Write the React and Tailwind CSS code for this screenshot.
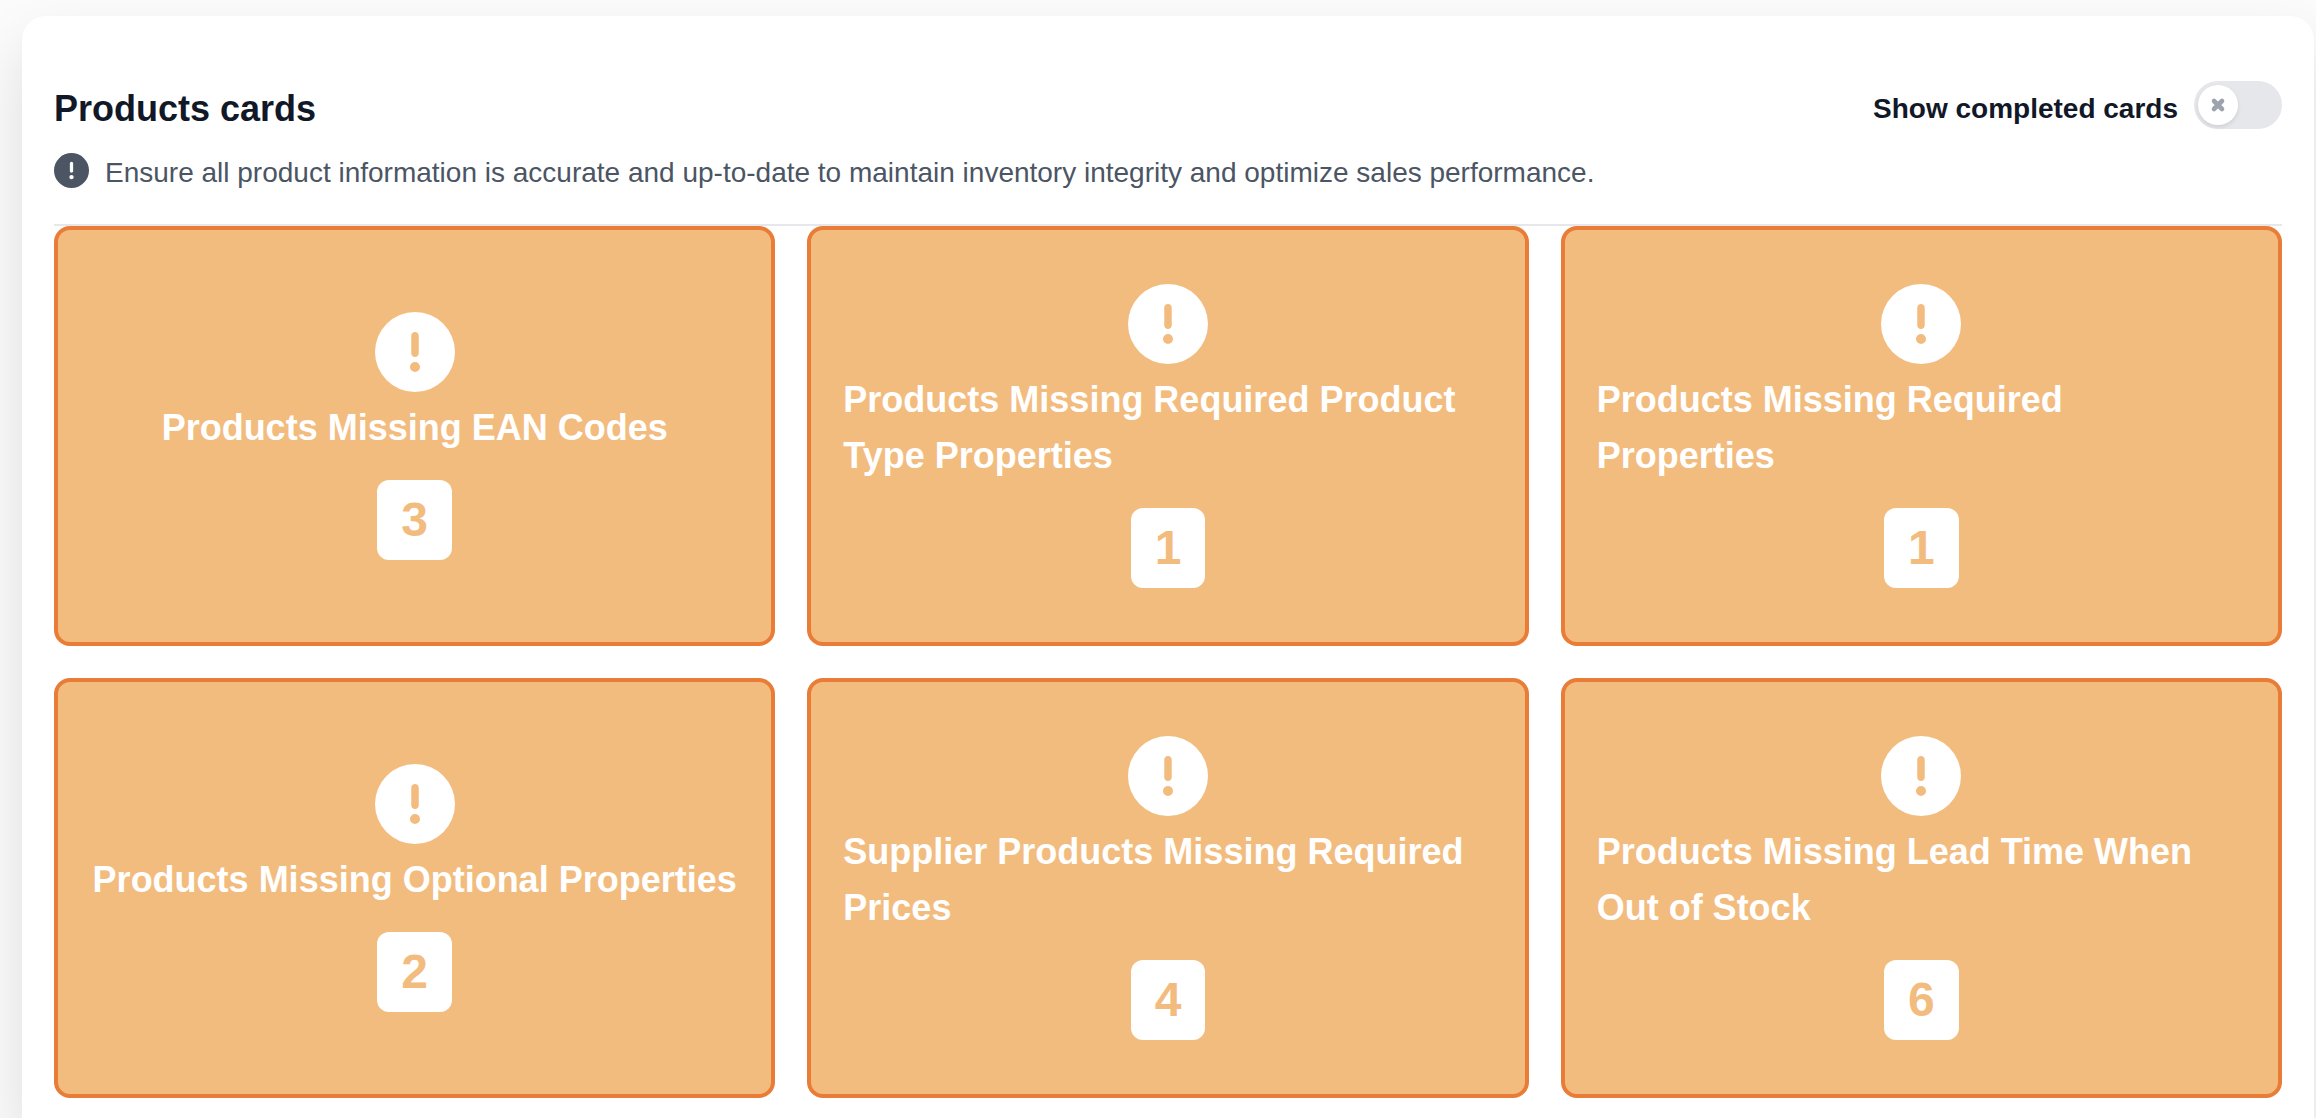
import { useState } from "react";
import { FaCircleExclamation } from "react-icons/fa6";

const cards = [
  { title: "Products Missing EAN Codes", count: 3 },
  { title: "Products Missing Required Product Type Properties", count: 1 },
  { title: "Products Missing Required Properties", count: 1 },
  { title: "Products Missing Optional Properties", count: 2 },
  { title: "Supplier Products Missing Required Prices", count: 4 },
  { title: "Products Missing Lead Time When Out of Stock", count: 6 },
];

function Toggle({ id, checked, onChange }) {
  return (
    <span className="relative flex">
      <input
        id={id}
        type="checkbox"
        role="switch"
        checked={checked}
        onChange={(e) => onChange(e.target.checked)}
        className="peer h-12 w-22 cursor-pointer appearance-none rounded-full bg-[#e5e7eb] checked:bg-orange-400"
      />
      <span className="pointer-events-none absolute top-1 left-1 flex size-10 items-center justify-center rounded-full bg-white shadow-[0_2px_4px_rgba(0,0,0,0.1)] peer-checked:left-11">
        <svg className="size-6 text-[#9ca3af]" viewBox="0 0 12 12" fill="none" aria-hidden="true">
          <path
            d="M4 8l4-4M8 8L4 4"
            stroke="currentColor"
            strokeWidth="2.3"
            strokeLinecap="round"
            strokeLinejoin="round"
          />
        </svg>
      </span>
    </span>
  );
}

function Card({ title, count }) {
  return (
    <article className="flex min-h-[420px] flex-col items-center justify-center rounded-2xl border-4 border-[#e97c36] bg-[#f3bc7f] px-8 text-white">
      <FaCircleExclamation className="size-20" aria-hidden="true" />
      <h3 className="mt-2 text-4xl leading-14 font-bold">{title}</h3>
      <span className="mt-6 flex h-20 items-center rounded-xl bg-white px-6 text-5xl font-bold text-[#f3bc7f]">
        {count}
      </span>
    </article>
  );
}

export default function App() {
  const [showCompleted, setShowCompleted] = useState(false);

  return (
    <div className="min-h-screen overflow-hidden bg-[#fbfbfb] pt-4 pr-0.5 pl-5.5 font-['Liberation_Sans',Arial,sans-serif]">
      <main className="rounded-t-3xl bg-white px-8 pt-[65px] pb-5 shadow-[0_30px_60px_rgba(0,0,0,0.12)]">
        <header className="border-b-2 border-[#e5e7eb] pb-[31px]">
          <div className="flex items-start justify-between">
            <h2 className="text-4xl leading-14 font-bold text-[#111827]">Products cards</h2>
            <div className="flex items-start gap-4">
              <label
                htmlFor="show-completed"
                className="text-[28px] leading-14 font-bold text-[#111827]"
              >
                Show completed cards
              </label>
              <Toggle id="show-completed" checked={showCompleted} onChange={setShowCompleted} />
            </div>
          </div>
          <p className="mt-4 flex items-start gap-4 text-[28px] leading-10 text-[#4b5563]">
            <FaCircleExclamation className="size-[35px] shrink-0" aria-hidden="true" />
            Ensure all product information is accurate and up-to-date to maintain inventory
            integrity and optimize sales performance.
          </p>
        </header>
        <section className="grid grid-cols-3 gap-8">
          {cards.map((card) => (
            <Card key={card.title} {...card} />
          ))}
        </section>
      </main>
    </div>
  );
}
